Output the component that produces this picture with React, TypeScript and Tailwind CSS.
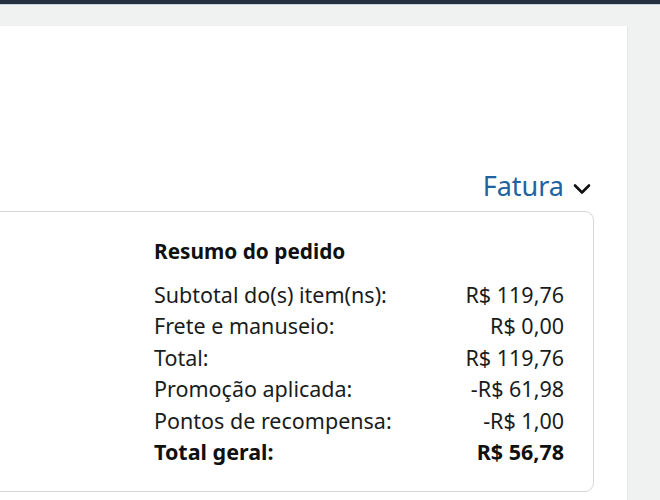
import React from 'react';

// Order summary fragment — "Resumo do pedido" card under the invoice link.
const ROWS: { label: string; value: string; bold?: boolean }[] = [
  { label: 'Subtotal do(s) item(ns):', value: 'R$ 119,76' },
  { label: 'Frete e manuseio:', value: 'R$ 0,00' },
  { label: 'Total:', value: 'R$ 119,76' },
  { label: 'Promoção aplicada:', value: '-R$ 61,98' },
  { label: 'Pontos de recompensa:', value: '-R$ 1,00' },
  { label: 'Total geral:', value: 'R$ 56,78', bold: true },
];

function Chevron() {
  return (
    <svg width="18" height="12" viewBox="0 0 18 12" fill="none" className="mt-[6px]">
      <path d="M2 2.5 L9 9.5 L16 2.5" stroke="#0f1111" strokeWidth="2.6" strokeLinecap="round" strokeLinejoin="round" />
    </svg>
  );
}

export default function App() {
  return (
    <div
      className="flex h-[500px] w-[660px] flex-col overflow-hidden bg-[#f0f2f2] text-[#0f1111]"
      style={{ fontFamily: '"Noto Sans", "Open Sans", sans-serif' }}
    >
      {/* top nav edge */}
      <div className="h-[4px] shrink-0 bg-[#232f3e]" />
      <div className="h-[1px] shrink-0 bg-[#c7d3dc]" />

      <div className="flex min-h-0 flex-1 pt-[21px]">
        <div className="flex min-h-0 w-[627px] shrink-0 flex-col bg-white">
          <div className="flex h-[185px] shrink-0 items-end justify-end pr-[36px] pb-[8px]">
            <button type="button" className="flex items-center gap-[9px] text-[27px] leading-[34px] text-[#2162a1]">
              Fatura
              <Chevron />
            </button>
          </div>

          <div className="mr-[33px] ml-[-20px] rounded-[9px] border border-[#d5d9d9] pt-[25px] pr-[29px] pb-[24px] pl-[173px]">
            <div className="text-[20.8px] font-bold leading-[28px]">Resumo do pedido</div>
            <div className="mt-[14px] flex flex-col">
              {ROWS.map((r) => (
                <div
                  key={r.label}
                  className={`flex justify-between text-[21.5px] leading-[31.4px] ${r.bold ? 'font-bold' : 'text-[#1a1c1c]'}`}
                >
                  <span>{r.label}</span>
                  <span>{r.value}</span>
                </div>
              ))}
            </div>
          </div>
        </div>
        <div className="w-[1px] shrink-0 bg-[#e7e9e9]" />
      </div>
    </div>
  );
}
